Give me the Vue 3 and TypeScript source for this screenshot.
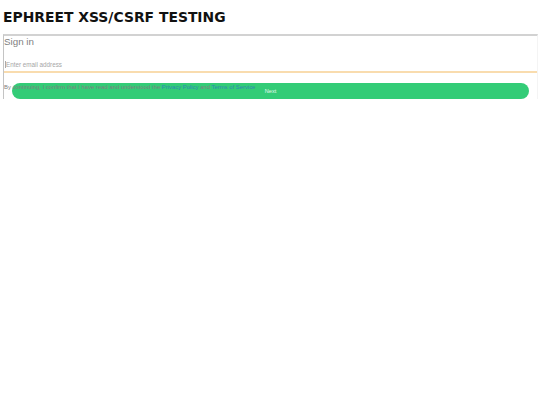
<script setup lang="ts">
const title = 'EPHREET XSS/CSRF TESTING'
</script>

<template>
  <div class="page">
    <h1 class="title">{{ title }}</h1>
    <div class="card">
      <div class="signin">Sign in</div>
      <div class="field"><span class="caret"></span><span class="placeholder">Enter email address</span></div>
      <div class="actions">
        <button class="next" type="button">Next</button>
        <p class="terms">By continuing, I confirm that I have read and understood the <a>Privacy Policy</a> and <a>Terms of Service</a></p>
      </div>
    </div>
  </div>
</template>

<style scoped>
.page {
  padding: 10px 2px 0 3px;
  font-family: "Liberation Sans", sans-serif;
}
.title {
  margin: 0;
  font-family: "DejaVu Sans", sans-serif;
  font-size: 13.9px;
  line-height: 14px;
  height: 24px;
  font-weight: 700;
  color: #111;
}
.card {
  height: 65px;
  box-sizing: border-box;
  border-top: 2px solid #d2d2d2;
  border-left: 1px solid #c4c4c4;
  border-right: 1px solid #f4f4f4;
  overflow: hidden;
}
.signin {
  height: 11px;
  font-size: 9.8px;
  line-height: 11px;
  color: #808080;
}
.field {
  display: flex;
  align-items: flex-end;
  padding-bottom: 2px;
  box-sizing: border-box;
  height: 26px;
  border-bottom: 2px solid #f9dcae;
}
.caret {
  width: 1px;
  height: 7px;
  margin: 0 0 1px 1px;
  background: #aaa;
}
.placeholder {
  font-size: 6.3px;
  line-height: 9px;
  color: #a6a6a6;
}
.actions {
  display: grid;
  margin-top: 10px;
  padding: 0 8px;
}
.next {
  grid-area: 1 / 1;
  height: 16px;
  border: 0;
  border-radius: 8px;
  background: #33cc77;
  color: #e4f8ec;
  font-family: inherit;
  font-size: 5.6px;
  padding: 0;
}
.terms {
  grid-area: 1 / 1;
  margin: 0 0 0 -8px;
  font-size: 5.9px;
  line-height: 9px;
  height: 9px;
  white-space: nowrap;
  color: #808080;
}
.terms a {
  color: #2f88b4;
}
</style>

<style>
html, body { background: #fff; }
</style>
